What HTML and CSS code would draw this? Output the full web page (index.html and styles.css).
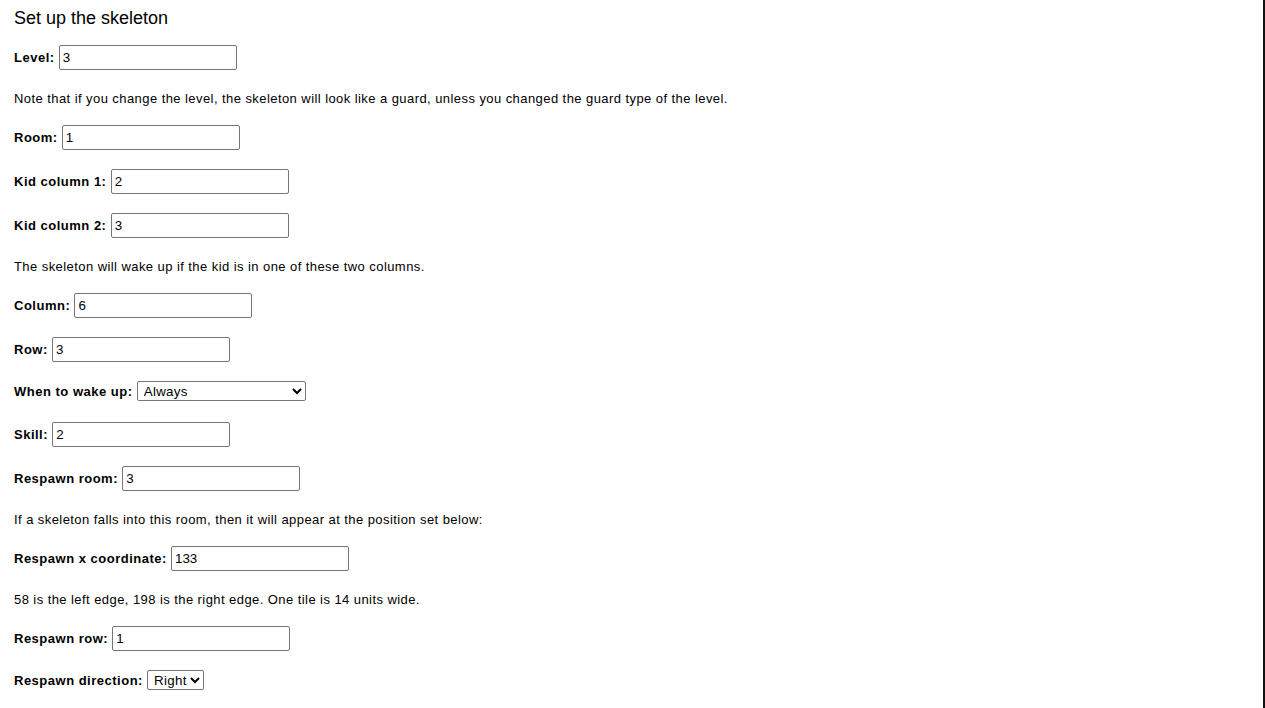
FILE: index.html
```html
<!DOCTYPE html>
<html lang="en">
<head>
    <meta charset="UTF-8">
    <meta name="viewport" content="width=device-width, initial-scale=1.0">
    <title>Set up the skeleton</title>
    <link rel="stylesheet" href="styles.css">
</head>
<body>
    <div class="page">
        <h1>Set up the skeleton</h1>

        <div class="field">
            <label for="level">Level:</label>
            <input type="text" id="level" value="3">
        </div>

        <p class="note">Note that if you change the level, the skeleton will look like a guard, unless you changed the guard type of the level.</p>

        <div class="field">
            <label for="room">Room:</label>
            <input type="text" id="room" value="1">
        </div>

        <div class="field">
            <label for="kid_col1">Kid column 1:</label>
            <input type="text" id="kid_col1" value="2">
        </div>

        <div class="field">
            <label for="kid_col2">Kid column 2:</label>
            <input type="text" id="kid_col2" value="3">
        </div>

        <p class="note">The skeleton will wake up if the kid is in one of these two columns.</p>

        <div class="field">
            <label for="column">Column:</label>
            <input type="text" id="column" value="6">
        </div>

        <div class="field">
            <label for="row">Row:</label>
            <input type="text" id="row" value="3">
        </div>

        <div class="field field-select">
            <label for="wake">When to wake up:</label>
            <select id="wake" class="wide">
                <option>Always</option>
                <option>When the kid is near</option>
                <option>Never</option>
            </select>
        </div>

        <div class="field">
            <label for="skill">Skill:</label>
            <input type="text" id="skill" value="2">
        </div>

        <div class="field">
            <label for="respawn_room">Respawn room:</label>
            <input type="text" id="respawn_room" value="3">
        </div>

        <p class="note">If a skeleton falls into this room, then it will appear at the position set below:</p>

        <div class="field">
            <label for="respawn_x">Respawn x coordinate:</label>
            <input type="text" id="respawn_x" value="133">
        </div>

        <p class="note">58 is the left edge, 198 is the right edge. One tile is 14 units wide.</p>

        <div class="field">
            <label for="respawn_row">Respawn row:</label>
            <input type="text" id="respawn_row" value="1">
        </div>

        <div class="field field-select">
            <label for="respawn_dir">Respawn direction:</label>
            <select id="respawn_dir" class="narrow">
                <option>Right</option>
                <option>Left</option>
            </select>
        </div>
    </div>
</body>
</html>
```

FILE: styles.css
```css
body { margin: 0; font-family: Arial, "Liberation Sans", sans-serif; font-size: 13px; color: #000; background: #fff; }
.page { min-height: 100vh; box-sizing: border-box; padding: 10px 14px 8px; border-right: 2px solid #111; }
h1 { font-size: 18px; font-weight: normal; line-height: 16px; margin: 0 0 19px; }
.field { display: flex; align-items: center; gap: 4.2px; margin: 19px 0; }
.field-select { margin-bottom: 21px; }
label { font-weight: bold; line-height: 15px; letter-spacing: 0.5px; }
.note { line-height: 15px; margin: 21px 0 19px; letter-spacing: 0.43px; }
input { width: 178px; height: 25px; box-sizing: border-box; margin: 0; padding: 1px 3px; font-family: Arial, "Liberation Sans", sans-serif; font-size: 13.33px; border: 1px solid #767676; border-radius: 2px; }
select { height: 20px; box-sizing: border-box; margin: 0; padding-left: 2px; font-family: Arial, "Liberation Sans", sans-serif; font-size: 13.33px; letter-spacing: 0.3px; border: 1px solid #767676; border-radius: 2px; background: #fff; color: #000; }
select.wide { width: 169px; }
select.narrow { width: 57px; }
```
